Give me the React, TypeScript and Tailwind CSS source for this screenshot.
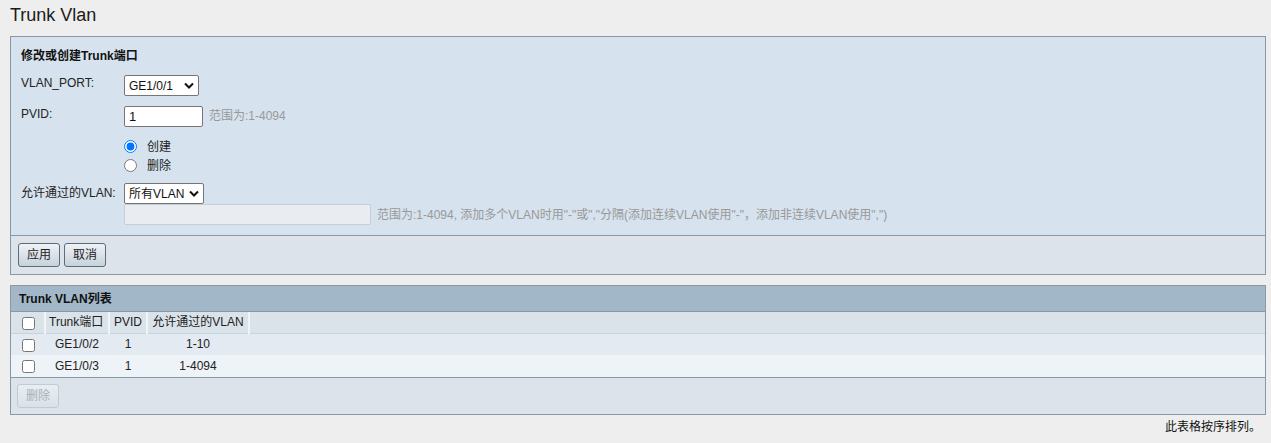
import React from 'react';

const font = "font-['Liberation_Sans','Noto_Sans_CJK_SC',sans-serif]";

function Chevron() {
  return (
    <svg width="10" height="7" viewBox="0 0 10 7" className="shrink-0">
      <path d="M1 1.5 L5 5.5 L9 1.5" fill="none" stroke="#111" strokeWidth="2" />
    </svg>
  );
}

function Select({ value, width }: { value: string; width: string }) {
  return (
    <div className={`${width} h-[21px] bg-white border border-[#767676] rounded-[2px] flex items-center justify-between pl-[4px] pr-[4px] text-[12px] text-[#111] whitespace-nowrap`}>
      <span>{value}</span>
      <Chevron />
    </div>
  );
}

function Btn({ label, disabled }: { label: string; disabled?: boolean }) {
  return (
    <button
      className={
        disabled
          ? 'w-[42px] h-[24px] rounded-[3px] border border-[#c3cbd2] bg-gradient-to-b from-[#e9eef2] to-[#d9e1e8] text-[12px] text-[#a9b1b8]'
          : 'w-[42px] h-[24px] rounded-[3px] border border-[#5f6b75] bg-gradient-to-b from-[#eef2f6] to-[#c7d2dc] text-[12px] text-[#222]'
      }
    >
      {label}
    </button>
  );
}

export default function App() {
  const rows = [
    { port: 'GE1/0/2', pvid: '1', vlan: '1-10', bg: 'bg-[#e3eaf2]' },
    { port: 'GE1/0/3', pvid: '1', vlan: '1-4094', bg: 'bg-[#eef3f8]' },
  ];

  return (
    <div className={`min-h-screen bg-[#eeeeee] ${font} text-[12px] text-[#222]`}>
      <h1 className="h-[36px] pl-[10px] pt-[4px] text-[18px] leading-[22px] text-[#1a1a1a]">Trunk Vlan</h1>

      {/* form panel */}
      <div className="ml-[10px] mr-[5px] border border-[#8799a6]">
        <div className="bg-[#d6e2ee] border-b border-[#8799a6] pl-[10px] pt-[10px] pb-[10px] h-[199px]">
          <div className="h-[18px] leading-[18px] font-bold text-[#111]">修改或创建Trunk端口</div>

          <div className="flex mt-[10px] h-[21px]">
            <div className="w-[103px] leading-[16px]">VLAN_PORT:</div>
            <Select value="GE1/0/1" width="w-[75px]" />
          </div>

          <div className="flex mt-[10px] h-[21px] items-start">
            <div className="w-[103px] leading-[16px]">PVID:</div>
            <div className="w-[79px] h-[21px] bg-white border border-[#767676] rounded-[2px] pl-[4px] text-[13px] leading-[19px] text-[#111]">1</div>
            <span className="ml-[6px] leading-[21px] text-[#999]">范围为:1-4094</span>
          </div>

          <div className="ml-[103px] mt-[10px] flex flex-col">
            <label className="flex items-center h-[19px]">
              <input type="radio" name="op" defaultChecked className="w-[13px] h-[13px] m-0" />
              <span className="ml-[10px]">创建</span>
            </label>
            <label className="flex items-center h-[19px]">
              <input type="radio" name="op" className="w-[13px] h-[13px] m-0" />
              <span className="ml-[10px]">删除</span>
            </label>
          </div>

          <div className="flex mt-[8px] h-[21px]">
            <div className="w-[103px] leading-[20px]">允许通过的VLAN:</div>
            <Select value="所有VLAN" width="w-[80px]" />
          </div>
          <div className="flex ml-[103px] h-[21px] items-center">
            <div className="w-[247px] h-[21px] bg-[#e9edf1] border border-[#c5cdd5] rounded-[2px]" />
            <span className="ml-[6px] text-[#999]">
              范围为:1-4094, 添加多个VLAN时用"-"或","分隔(添加连续VLAN使用"-"，添加非连续VLAN使用",")
            </span>
          </div>
        </div>
        <div className="h-[38px] bg-[#dce3ea] flex items-center gap-[4px] pl-[7px]">
          <Btn label="应用" />
          <Btn label="取消" />
        </div>
      </div>

      {/* list panel */}
      <div className="ml-[10px] mr-[5px] mt-[10px] border border-[#8799a6]">
        <div className="h-[26px] bg-[#a2b8c9] border-b border-[#8799a6] pl-[8px] flex items-center font-bold text-[#111]">
          Trunk VLAN列表
        </div>
        <table className="w-full table-fixed border-collapse">
          <thead>
            <tr className="h-[21px] bg-[#dbe3ea] border-b border-[#c5d3de]">
              <th className="w-[34px] border-r-2 border-[#f0f4f8] p-0 pl-[1px] font-normal">
                <input type="checkbox" className="w-[13px] h-[13px] m-0 align-middle" />
              </th>
              <th className="w-[64px] border-r-2 border-[#f0f4f8] font-normal px-[3px] text-left whitespace-nowrap">Trunk端口</th>
              <th className="w-[38px] border-r-2 border-[#f0f4f8] font-normal text-center whitespace-nowrap p-0">PVID</th>
              <th className="w-[102px] border-r-2 border-[#f0f4f8] font-normal text-center whitespace-nowrap p-0">允许通过的VLAN</th>
              <th />
            </tr>
          </thead>
          <tbody>
            {rows.map((r) => (
              <tr key={r.port} className={`h-[22px] ${r.bg}`}>
                <td className="text-center p-0 pl-[1px]">
                  <input type="checkbox" className="w-[13px] h-[13px] m-0 align-middle" />
                </td>
                <td className="text-center p-0">{r.port}</td>
                <td className="text-center p-0">{r.pvid}</td>
                <td className="text-center p-0">{r.vlan}</td>
                <td />
              </tr>
            ))}
          </tbody>
        </table>
        <div className="h-[37px] bg-[#dce3ea] border-t border-[#8799a6] flex items-center pl-[6px]">
          <Btn label="删除" disabled />
        </div>
      </div>

      <div className="text-right pr-[10px] mt-[4px] leading-[16px] text-[#111]">此表格按序排列。</div>
    </div>
  );
}
